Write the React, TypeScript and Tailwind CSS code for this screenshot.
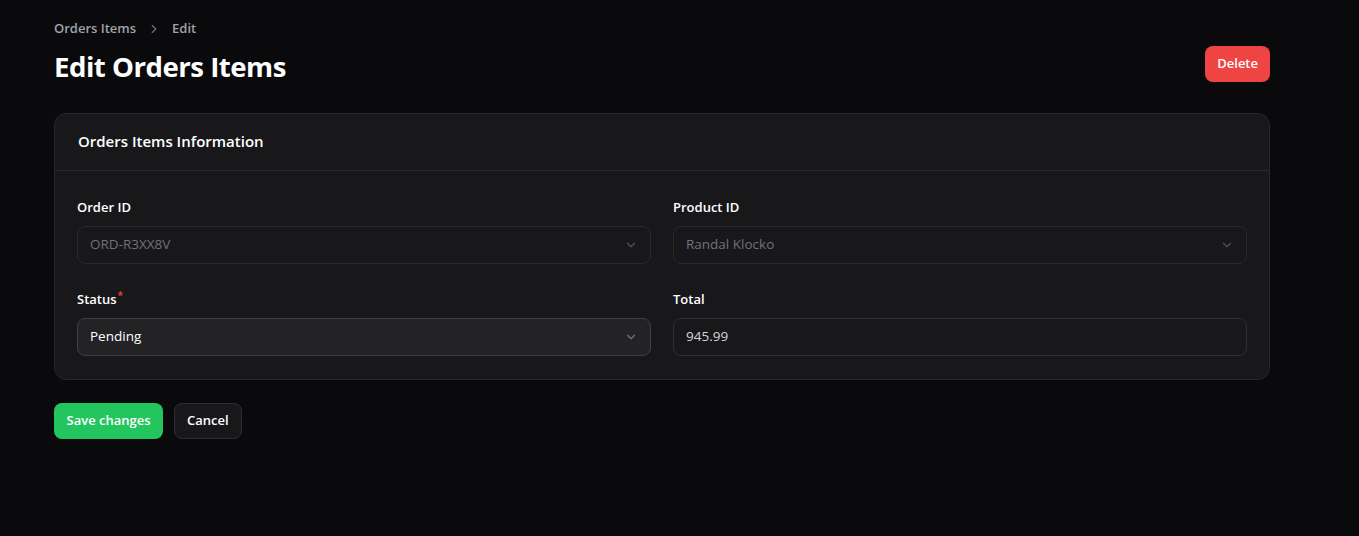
import React from "react";

const Chevron = () => (
  <svg width="14" height="14" viewBox="0 0 24 24" fill="none" stroke="currentColor" strokeWidth="2" strokeLinecap="round" strokeLinejoin="round">
    <path d="m6 9 6 6 6-6" />
  </svg>
);

export default function App() {
  return (
    <div className="min-h-[536px] w-full bg-[#0a0a0c] text-white" style={{ fontFamily: '"Open Sans", "Noto Sans", sans-serif' }}>
      <div className="w-[1216px] ml-[54px] pt-[19px]">
        <div className="flex items-center gap-[11px] text-[13px] font-semibold text-[#a1a1aa]">
          <span>Orders Items</span>
          <svg width="14" height="14" viewBox="0 0 24 24" fill="none" stroke="currentColor" strokeWidth="2" strokeLinecap="round" strokeLinejoin="round" className="text-[#71717a]">
            <path d="m9 18 6-6-6-6" />
          </svg>
          <span>Edit</span>
        </div>
        <div className="flex items-center justify-between mt-[7px]">
          <h1 className="text-[27.6px] font-bold tracking-[-0.5px] leading-[40px]">Edit Orders Items</h1>
          <button className="h-[36px] px-[12px] mb-[4px] rounded-lg bg-[#ef4444] text-[13px] font-semibold text-white">Delete</button>
        </div>
        <div className="mt-[27px] rounded-xl border border-[#27272a] bg-[#18181b]">
          <div className="h-[57px] flex items-center px-[23px] border-b border-[#2a2a2e] text-[15px] font-semibold">
            Orders Items Information
          </div>
          <div className="grid grid-cols-2 gap-x-[22px] gap-y-[26px] px-[22px] pb-[23px] pt-[27px]">
            <Field label="Order ID">
              <div className="h-[38px] rounded-lg border border-[#2a2a2e] bg-[#18181b] flex items-center justify-between px-[12px] text-[13.5px] text-[#71717a]">
                <span>ORD-R3XX8V</span>
                <span className="text-[#52525b]"><Chevron /></span>
              </div>
            </Field>
            <Field label="Product ID">
              <div className="h-[38px] rounded-lg border border-[#2a2a2e] bg-[#18181b] flex items-center justify-between px-[12px] text-[13.5px] text-[#71717a]">
                <span>Randal Klocko</span>
                <span className="text-[#52525b]"><Chevron /></span>
              </div>
            </Field>
            <Field label="Status" required>
              <div className="h-[38px] rounded-lg border border-[#3f3f46] bg-[#232326] flex items-center justify-between px-[12px] text-[13.5px] text-white">
                <span>Pending</span>
                <span className="text-[#71717a]"><Chevron /></span>
              </div>
            </Field>
            <Field label="Total">
              <div className="h-[38px] rounded-lg border border-[#2f2f33] bg-[#18181b] flex items-center px-[12px] text-[13.5px] text-[#d4d4d8]">
                945.99
              </div>
            </Field>
          </div>
        </div>
        <div className="flex gap-[11px] mt-[23px]">
          <button className="h-[36px] px-[12.5px] rounded-lg bg-[#22c55e] text-[13px] font-semibold text-white">Save changes</button>
          <button className="h-[36px] px-[12px] rounded-lg bg-[#18181b] border border-[#2f2f33] text-[13px] font-semibold text-white">Cancel</button>
        </div>
      </div>
    </div>
  );
}

function Field({ label, required, children }: { label: string; required?: boolean; children: React.ReactNode }) {
  return (
    <div className="flex flex-col gap-[10px]">
      <div className="text-[13px] font-semibold leading-[18px] flex">
        {label}
        {required && <span className="text-[#ef4444] text-[10px] leading-[10px] ml-[1px]">*</span>}
      </div>
      {children}
    </div>
  );
}
